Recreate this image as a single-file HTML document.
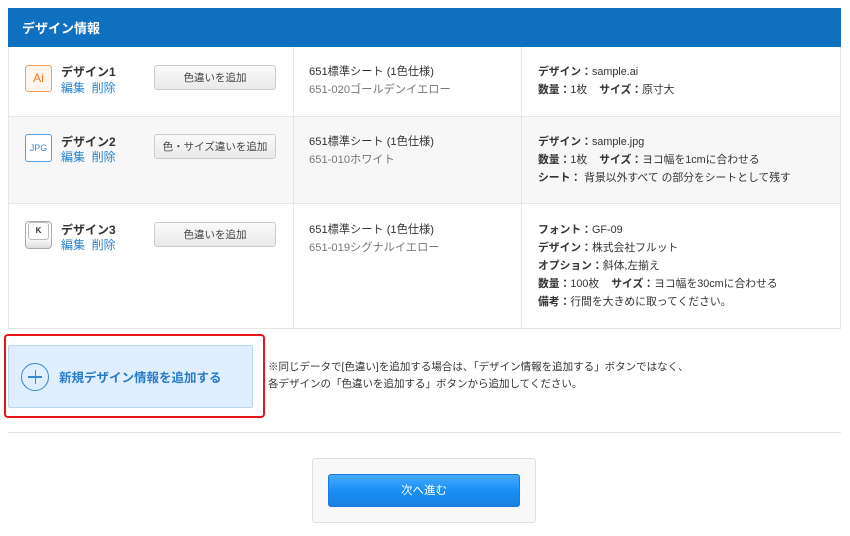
<!DOCTYPE html>
<html><head><meta charset="utf-8"><style>
*{margin:0;padding:0;box-sizing:border-box}
body{width:850px;height:536px;background:#fff;font-family:"Liberation Sans","Noto Sans CJK JP",sans-serif;font-size:11.5px;color:#333;position:relative;overflow:hidden}
.a{position:absolute}
.hd{left:8px;top:8px;width:833px;height:39px;background:#1070c0;color:#fff;font-weight:bold;font-size:13px;padding:10px 0 0 14px}
.tbl{left:8px;top:47px;width:833px;height:282px;border:1px solid #e5e5e5;border-top:none}
.row{position:absolute;left:0;width:831px;border-bottom:1px solid #e5e5e5}
.vl{position:absolute;top:0;bottom:0;width:1px;background:#e5e5e5}
.nm{font-weight:bold;font-size:12px;color:#333}
.lk{color:#2a83d0;font-size:12px}
.btn{position:absolute;width:122px;height:25px;border:1px solid #ccc;border-radius:3px;background:linear-gradient(#fafafa,#e9e9e9);text-align:center;line-height:24px;font-size:10.5px;color:#444}
.c2{position:absolute;left:309px;line-height:18px;font-size:11.2px}
.c2 .g{color:#777}
.c3{position:absolute;left:538px;line-height:18px;font-size:10.8px}
b{font-weight:bold}
</style></head><body>
<div class="a hd">デザイン情報</div>
<div class="a tbl">
 <div class="row" style="top:0;height:70px;background:#fff"></div>
 <div class="row" style="top:70px;height:87px;background:#f7f7f7"></div>
 <div class="row" style="top:157px;height:123px;background:#fff;border-bottom:none"></div>
 <div class="vl" style="left:284px"></div>
 <div class="vl" style="left:512px"></div>
</div>
<!-- row1 -->
<div class="a" style="left:25px;top:65px;width:27px;height:27px;border:1px solid #f5a060;border-radius:3px;background:#fff5ec;color:#f07a20;font-size:12px;text-align:center;line-height:25px">Ai</div>
<div class="a nm" style="left:61px;top:63px">デザイン1</div>
<div class="a lk" style="left:61px;top:79px">編集&nbsp; 削除</div>
<div class="btn" style="left:154px;top:65px">色違いを追加</div>
<div class="c2" style="top:63px">651標準シート (1色仕様)<br><span class="g">651-020ゴールデンイエロー</span></div>
<div class="c3" style="top:63px"><b>デザイン：</b>sample.ai<br><b>数量：</b>1枚&nbsp;&nbsp;&nbsp; <b>サイズ：</b>原寸大</div>
<!-- row2 -->
<div class="a" style="left:25px;top:134px;width:27px;height:28px;border:1px solid #5aa0dc;border-radius:3px;background:#fff;color:#3a88d0;font-size:9px;text-align:center;line-height:26px">JPG</div>
<div class="a nm" style="left:61px;top:133px">デザイン2</div>
<div class="a lk" style="left:61px;top:148px">編集&nbsp; 削除</div>
<div class="btn" style="left:154px;top:134px">色・サイズ違いを追加</div>
<div class="c2" style="top:133px">651標準シート (1色仕様)<br><span class="g">651-010ホワイト</span></div>
<div class="c3" style="top:133px"><b>デザイン：</b>sample.jpg<br><b>数量：</b>1枚&nbsp;&nbsp;&nbsp; <b>サイズ：</b>ヨコ幅を1cmに合わせる<br><b>シート：</b> 背景以外すべて の部分をシートとして残す</div>
<!-- row3 -->
<div class="a" style="left:25px;top:221px;width:27px;height:28px;border:1px solid #aaa;border-radius:4px;background:linear-gradient(#fff 60%,#ddd);"></div>
<div class="a" style="left:28px;top:222px;width:21px;height:18px;border:1px solid #bbb;border-radius:3px;background:#fff;font-size:8px;font-weight:bold;text-align:center;line-height:16px">K</div>
<div class="a nm" style="left:61px;top:221px">デザイン3</div>
<div class="a lk" style="left:61px;top:236px">編集&nbsp; 削除</div>
<div class="btn" style="left:154px;top:222px">色違いを追加</div>
<div class="c2" style="top:221px">651標準シート (1色仕様)<br><span class="g">651-019シグナルイエロー</span></div>
<div class="c3" style="top:221px"><b>フォント：</b>GF-09<br><b>デザイン：</b>株式会社フルット<br><b>オプション：</b>斜体,左揃え<br><b>数量：</b>100枚&nbsp;&nbsp;&nbsp; <b>サイズ：</b>ヨコ幅を30cmに合わせる<br><b>備考：</b>行間を大きめに取ってください。</div>
<!-- add -->
<div class="a" style="left:4px;top:334px;width:261px;height:84px;border:2px solid #e8141c;border-radius:4px"></div>
<div class="a" style="left:8px;top:345px;width:245px;height:63px;background:#dfefff;border:1px solid #b8d6f0;border-radius:2px"></div>
<div class="a" style="left:21px;top:363px;width:28px;height:28px;border:1.5px solid #3a88d0;border-radius:50%"></div>
<div class="a" style="left:28px;top:376px;width:14px;height:1.5px;background:#3a88d0"></div>
<div class="a" style="left:34.5px;top:370px;width:1.5px;height:14px;background:#3a88d0"></div>
<div class="a" style="left:59px;top:367px;color:#2a7cc8;font-weight:bold;font-size:12.5px">新規デザイン情報を追加する</div>
<div class="a" style="left:268px;top:359px;font-size:10.5px;line-height:17px;color:#333">※同じデータで[色違い]を追加する場合は、「デザイン情報を追加する」ボタンではなく、<br>各デザインの「色違いを追加する」ボタンから追加してください。</div>
<div class="a" style="left:8px;top:432px;width:833px;height:1px;background:#e5e5e5"></div>
<div class="a" style="left:312px;top:458px;width:224px;height:65px;background:#f8f8f8;border:1px solid #e0e0e0;border-radius:3px"></div>
<div class="a" style="left:328px;top:474px;width:192px;height:33px;border-radius:3px;background:linear-gradient(#48aaff,#1890f5 50%,#1a80e0);border:1px solid #1a7ad8;color:#fff;text-align:center;line-height:33px;font-size:11.5px">次へ進む</div>
</body></html>
